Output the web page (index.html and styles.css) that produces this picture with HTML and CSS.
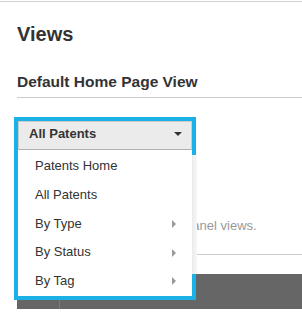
FILE: index.html
```html
<!DOCTYPE html>
<html lang="en">
<head>
    <meta charset="UTF-8">
    <meta name="viewport" content="width=device-width, initial-scale=1.0">
    <title>Views</title>
    <link rel="stylesheet" href="styles.css">
</head>
<body>
    <div class="top-rule"></div>

    <section class="settings">
        <h1>Views</h1>
        <h2>Default Home Page View</h2>

        <!-- Open picker, highlighted -->
        <div class="picker">
            <div class="picker-frame">
                <button class="picker-toggle">
                    <span>All Patents</span>
                    <span class="caret"></span>
                </button>
                <ul class="picker-menu">
                    <li>Patents Home</li>
                    <li>All Patents</li>
                    <li class="has-sub">By Type <span class="sub-arrow"></span></li>
                    <li class="has-sub">By Status <span class="sub-arrow"></span></li>
                    <li class="has-sub">By Tag <span class="sub-arrow"></span></li>
                </ul>
            </div>
        </div>

        <p class="note">Also used for the left panel views.</p>
        <div class="note-rule"></div>

        <div class="table-head">
            <div class="table-cell first"></div>
            <div class="table-cell"></div>
        </div>
    </section>
</body>
</html>
```

FILE: styles.css
```css
body {
    margin: 0;
    padding-top: 1px;
    background-color: #ffffff;
    font-family: 'Liberation Sans', Arial, sans-serif;
    color: #333333;
}

.top-rule {
    height: 1px;
    background-color: #d2d2d2;
}

.settings {
    padding-left: 17px;
}

h1 {
    margin: 21px 0 0;
    font-size: 20px;
    line-height: 23px;
    font-weight: bold;
}

h2 {
    margin: 27px 0 0;
    padding-bottom: 7px;
    font-size: 15.5px;
    line-height: 17px;
    font-weight: bold;
    border-bottom: 1px solid #cccccc;
}

/* Picker */
.picker {
    position: relative;
    height: 34px;
    margin-top: 19px;
    margin-left: -3px;
}

.picker-frame {
    position: absolute;
    top: 0;
    left: 0;
    z-index: 5;
    width: 182px;
    box-sizing: border-box;
    border: 4px solid #1bb1e7;
    background-color: #ffffff;
}

.picker-frame::after {
    content: '';
    position: absolute;
    left: 100%;
    top: 34px;
    width: 5px;
    height: 119px;
    background: linear-gradient(to right, #ebebeb, #f7f7f7);
}

.picker-toggle {
    display: flex;
    align-items: center;
    justify-content: space-between;
    width: 100%;
    height: 29px;
    box-sizing: border-box;
    margin: 0;
    padding: 3px 9px 6px 10px;
    border: 1px solid #cccccc;
    border-bottom-color: #b0b0b0;
    background-color: #ebebeb;
    font-family: inherit;
    font-size: 13px;
    line-height: 18px;
    font-weight: bold;
    color: #333333;
    text-align: left;
}

.caret {
    width: 0;
    height: 0;
    border-top: 4px solid #333333;
    border-left: 4px solid transparent;
    border-right: 4px solid transparent;
}

.picker-menu {
    list-style: none;
    margin: 0;
    padding: 2px 0 0.25px;
}

.picker-menu li {
    display: flex;
    align-items: center;
    justify-content: space-between;
    padding: 5px 16px 5px 17px;
    font-size: 13px;
    line-height: 18.75px;
    color: #333333;
}

.sub-arrow {
    width: 0;
    height: 0;
    border-left: 4px solid #9a9a9a;
    border-top: 4px solid transparent;
    border-bottom: 4px solid transparent;
}

/* Content behind the open menu */
.note {
    margin: 66px 0 0;
    padding-left: 46px;
    font-size: 13px;
    line-height: 18px;
    color: #999999;
}

.note-rule {
    height: 1px;
    margin-top: 19px;
    background-color: #cccccc;
}

.table-head {
    display: flex;
    height: 35px;
    margin-top: 19px;
    background-color: #666666;
}

.table-cell {
    flex: 1;
}

.table-cell.first {
    flex: 0 0 42px;
    border-right: 1px solid #7a7a7a;
}
```
